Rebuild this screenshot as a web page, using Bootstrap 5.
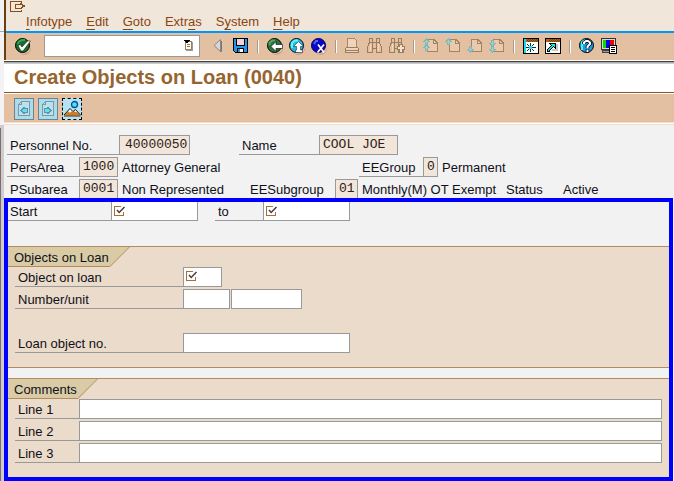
<!DOCTYPE html>
<html lang="en">
<head>
<meta charset="utf-8">
<meta name="viewport" content="width=device-width, initial-scale=1">
<title>Create Objects on Loan (0040)</title>
<link href="https://cdn.jsdelivr.net/npm/bootstrap@5.3.0/dist/css/bootstrap.min.css" rel="stylesheet">
<style>
  body { font: 13px/17px "Liberation Sans", Arial, sans-serif; color: #101018; background: #f2f2f2; }
  svg { display: block; shape-rendering: crispEdges; overflow: visible; }
  .soft { shape-rendering: auto; }
  button { font: inherit; }
  .edge { width: 4px; background: linear-gradient(#f2f2f4 0 31px, #a9a9ad 31px 32px, #f4f2f2 32px 125px, #d3cbcb 125px); }
  .edge-line { width: 1px; margin-top: 128px; background: #776e72; }
  .top-area { border-left: 2px solid #6b3f0c; }
  .menu-area { background: #f1e6da; border-bottom: 2px solid #0096fa; padding: 1px 0 0 4px; }
  .menu-row { gap: 14px; padding: 1px 0 1px 16px; }
  .menu-row button { color: #884513; line-height: 16px; }
  .menu-row u { text-underline-offset: 3px; text-decoration-thickness: 1px; }
  .tools { background: #e4c0a2; height: 27px; padding: 0 0 1px 9px; gap: 6px; }
  .cmd { width: 156px; margin: 0 5px 0 7px; }
  .cmd input { height: 22px; border: 1px solid #999; background: #fff; }
  .cmd button { top: 5px; right: 6px; }
  .split { width: 2px; height: 13px; margin: 1px 2px 0; border-left: 1px solid #a39a92; background: #fff; }
  .rule-dark { height: 4px; background: linear-gradient(#fff 0 1px, #444 1px 2px, #aaa 2px 3px, #ccc 3px); }
  .title-bar { background: #fff; border-bottom: 1px solid #875625; padding: 0 10px 2px; }
  .title-bar h1 { font: bold 20px/26px "Liberation Sans", Arial, sans-serif; color: #96652f; }
  .app-bar { background: #e4c0a2; border-top: 1px solid #fff; border-bottom: 1px solid #f0dccb; padding: 4px 10px 2px; gap: 4px; }
  .app-bar button { background: #a9dcec; border: 1px solid #74808a; width: 20px; height: 22px; padding: 0; }
  .app-bar button.now { border: 1px dashed #000; background: #b5e3f2; }
  .after-bar { height: 2px; background: #fff; border-bottom: 1px solid #f0dccb; }
  .head-form { padding: 10px 0 0 3px; }
  .line-row { height: 20px; margin-bottom: 2px; }
  .line-row.cut { height: 19px; margin-bottom: 0; }
  .cap { border-bottom: 1px solid #999; padding: 2px 0 0 3px; white-space: nowrap; flex: none; }
  .cut .cap { border-bottom: 0; }
  .val { padding: 2px 0 0 4px; white-space: nowrap; flex: none; }
  .fld { display: block; border: 1px solid #999; background: #fff; border-radius: 0; padding: 0 2px; height: 20px; min-width: 0; flex: none; outline: 0; }
  .fld.ro { background: #f2e6da; font: 13px/17px "Liberation Mono", "Courier New", monospace; color: #2c2018; padding: 0 0 1px 3px; }
  .fld.wide-pad { padding-left: 5px; }
  .cut .fld { height: 19px; border-bottom: 0; }
  .start-row { height: 19px; margin-bottom: 25px; }
  .start-row .fld { height: 19px; border-top: 0; }
  .need { position: relative; flex: none; }
  .need svg { position: absolute; left: 3px; top: 4px; }
  .w15 { width: 15px } .w23 { width: 23px } .w39 { width: 39px } .w47 { width: 47px }
  .w48 { width: 48px } .w56 { width: 56px } .w64 { width: 64px } .w71 { width: 71px }
  .w72 { width: 72px } .w79 { width: 79px } .w80 { width: 80px } .w87 { width: 87px }
  .w88 { width: 88px } .w103 { width: 103px } .w112 { width: 112px } .w129 { width: 129px }
  .w145 { width: 145px } .w167 { width: 167px } .w168 { width: 168px } .w241 { width: 241px }
  .ml49 { margin-left: 49px } .ml17 { margin-left: 17px } .ml1 { margin-left: 1px }
  .focus-frame { border: 4px solid #00f; margin-right: 1px; }
  .start-row .cap { padding: 1px 0 0 2px; }
  .start-row .cap.ml17 { padding-left: 3px; }
  .group { background: #ebdbcb; border-top: 1px solid #b48a60; padding: 0 7px 0; }
  .group-tab { font-size: 13px; line-height: 17px; margin: 0 0 0 -7px; height: 20px; }
  .group-tab span { background: #d9cba6; border-bottom: 1px solid #b48a60; padding: 2px 0 0 6px; white-space: nowrap; }
  .tab-loan { width: 102px } .tab-note { width: 70px }
  .loan { border-bottom: 1px solid #b48a60; padding-bottom: 12px; margin-bottom: 10px; }
  .notes { padding-bottom: 12px; }
  .space-row { height: 22px; }
</style>
</head>
<body>
<svg width="0" height="0" class="position-absolute" aria-hidden="true">
  <defs>
    <g id="req"><path d="M7 .5H.5V9.500H9.500V6" fill="none" stroke="#a5712e"/><path class="soft" d="M3 4L5.200 6.500L10.500 1" fill="none" stroke="#4a3a44" stroke-width="1.500"/></g>
    <g id="sheet"><path d="M5.500 2.500H12L15.500 6V14.500H5.500Z" fill="#ebc9ae" stroke="#a08660"/><path d="M11.500 2.500V6.500H15" fill="none" stroke="#a08660"/></g>
    <g id="up"><path d="M3 0H4V1H5V2H6V3H7V4H5V7H2V4H0V3H1V2H2V1H3Z" fill="#84b5b0"/><path d="M3 2H4V6H3ZM2 3H5V4H2Z" fill="#94d6d8"/></g>
    <g id="down"><path d="M3 7H4V6H5V5H6V4H7V3H5V0H2V3H0V4H1V5H2V6H3Z" fill="#84b5b0"/><path d="M3 1H4V5H3ZM2 3H5V4H2Z" fill="#94d6d8"/></g>
    <g id="bino"><path d="M2.500 .5H5.500V4.500H9.500V.5H12.500V4.500L14.500 9V14.500H9.500V10.500H5.500V14.500H.5V9L2.500 4.500Z" fill="#e8bd9e" stroke="#958060"/><path d="M2 4.500H6M9 4.500H13M5.500 5V10M9.500 5V10" stroke="#958060"/><path d="M3 6V13M11 6V13" stroke="#f7d9c3"/></g>
    <g id="page"><path d="M6.500 2.500H14.500V16.500H3.500V5.500Z" fill="#b9e2ec" stroke="#8098a4"/><path d="M6.500 3V5.500H4" fill="none" stroke="#8098a4"/></g>
    <g id="win"><path d="M.5 .5H15.500V15.500H.5Z" fill="#fff" stroke="#000"/><path d="M1 1H15V4H1Z" fill="#a8641c"/><path d="M5 1.500H15M4 2.500H15M5 3.500H15" stroke="#74420e" stroke-dasharray="1 1"/></g>
    <g id="shade"><path class="soft" d="M15 6A7 7 0 0 1 5 15.500L9 16L14 14L16 10Z" fill="#c79a8c"/></g>
  </defs>
</svg>

<div class="d-flex min-vh-100">
  <div class="edge d-flex flex-shrink-0"><div class="edge-line"></div></div>
  <main class="flex-grow-1 d-flex flex-column">
    <header>
      <div class="top-area">
        <div class="menu-area">
          <svg width="16" height="12" viewBox="0 0 16 12" aria-hidden="true"><path d="M11.500 2V.5H.5V10.500H11.500V9" fill="none" stroke="#884d18"/><path d="M5.500 3.500H10.500V2.500H11.500V3.500H12.500V4.500H14.500V5.500H12.500V6.500H11.500V7.500H5.500Z" fill="#f1e6da" stroke="#884d18"/></svg>
          <nav class="menu-row d-flex" aria-label="Menu">
            <button class="border-0 bg-transparent p-0"><u>I</u>nfotype</button>
            <button class="border-0 bg-transparent p-0"><u>E</u>dit</button>
            <button class="border-0 bg-transparent p-0"><u>G</u>oto</button>
            <button class="border-0 bg-transparent p-0">Extr<u>a</u>s</button>
            <button class="border-0 bg-transparent p-0">S<u>y</u>stem</button>
            <button class="border-0 bg-transparent p-0"><u>H</u>elp</button>
          </nav>
        </div>
        <div class="tools d-flex align-items-center">
          <button class="border-0 bg-transparent p-0" aria-label="Enter"><svg class="soft" width="16" height="16" viewBox="0 0 16 16"><use href="#shade"/><circle cx="7.500" cy="7.500" r="7" fill="#14702a" stroke="#000"/><path d="M2.500 6L4 3.500L7 2H10" fill="none" stroke="#35a552" stroke-width="2"/><path d="M3 7.500L5 6.500L7 9L12.500 3H15.500L8 13H6Z" fill="#fff" stroke="#000" stroke-width=".5"/></svg></button>
          <div class="cmd position-relative">
            <input class="w-100 rounded-0 d-block px-1" aria-label="Command">
            <button class="position-absolute border-0 bg-transparent p-0" aria-label="Command history"><svg width="10" height="11" viewBox="0 0 10 11"><path d="M1.500 1V9.500H7.500V1Z" fill="#fff" stroke="#9b8060"/><path d="M8.500 2V10.500H2" fill="none" stroke="#9c9c9c"/><path d="M3 4.500H6M3 6.500H6" stroke="#997448"/><path d="M0 0H6V1H5V2H4V3H2V2H1V1H0Z" fill="#000"/></svg></button>
          </div>
          <button class="border-0 bg-transparent p-0" aria-label="Collapse"><svg class="soft" width="16" height="16" viewBox="0 0 16 16"><path d="M3 7.500L9.500 1.500V13.500Z" fill="#d6d6d6" stroke="#888"/><path d="M10.500 3V13.500L9 13" fill="none" stroke="#777"/></svg></button>
          <button class="border-0 bg-transparent p-0" aria-label="Save"><svg width="16" height="16" viewBox="0 0 16 16"><path d="M.5 .5H14.500V14.500H2.500L.5 12.500Z" fill="#2992e4" stroke="#000"/><path d="M3.500 .5H11.500V7.500H3.500Z" fill="#ecd3dc" stroke="#000"/><path d="M4.500 10.500H10.500V14.500H4.500Z" fill="#f7f7f7" stroke="#000"/><path d="M5 11H7V14H5Z" fill="#2992e4"/></svg></button>
          <span class="split"></span>
          <button class="border-0 bg-transparent p-0" aria-label="Back"><svg class="soft" width="16" height="16" viewBox="0 0 16 16"><use href="#shade"/><circle cx="7.500" cy="7.500" r="7" fill="#28733a" stroke="#000"/><path d="M2.500 7V5L5 2.500H8" fill="none" stroke="#59a75c" stroke-width="2"/><path d="M4 8.500L9 3.500V6.500H15.500V10.500H9V13.500Z" fill="#fff" stroke="#000" stroke-width=".6"/></svg></button>
          <button class="border-0 bg-transparent p-0" aria-label="Exit"><svg class="soft" width="16" height="16" viewBox="0 0 16 16"><use href="#shade"/><circle cx="7.500" cy="7.500" r="7" fill="#27b8e8" stroke="#000"/><path d="M3 10V5L6 2.500H9" fill="none" stroke="#5df4fa" stroke-width="2"/><path d="M9.500 3.500L14.500 8.500H11.500V12H13.500V14.500H6.500V12H7.500V8.500H4.500Z" fill="#fff" stroke="#0a3054" stroke-width=".6"/></svg></button>
          <button class="border-0 bg-transparent p-0" aria-label="Cancel"><svg class="soft" width="16" height="16" viewBox="0 0 16 16"><use href="#shade"/><circle cx="7.500" cy="7.500" r="7" fill="#0808c8" stroke="#000050"/><path d="M3 6L5 3H7" fill="none" stroke="#5165f0" stroke-width="2"/><path d="M7 6.500L13 14.500M13 6.500L6.500 14.500" stroke="#fff" stroke-width="1.700"/></svg></button>
          <span class="split"></span>
          <button class="border-0 bg-transparent p-0" aria-label="Print"><svg width="16" height="16" viewBox="0 0 16 16"><path d="M2.500 .5H9.500L11.500 2.500V9.500H2.500Z" fill="#f1d2bc" stroke="#a58a64"/><path d="M1.500 9.500H12.500L13.500 11V14.500H.5V11Z" fill="#f1d2bc" stroke="#958060"/><path d="M1 12.500H13" stroke="#958060"/></svg></button>
          <button class="border-0 bg-transparent p-0" aria-label="Find"><svg width="16" height="16" viewBox="0 0 16 16"><use href="#bino"/></svg></button>
          <button class="border-0 bg-transparent p-0" aria-label="Find next"><svg width="16" height="16" viewBox="0 0 16 16"><use href="#bino"/><path d="M10.500 6.500H13.500V8.500H15.500V11.500H13.500V14.500H10.500V11.500H8.500V8.500H10.500Z" fill="#f7dfcd" stroke="#958060"/></svg></button>
          <span class="split"></span>
          <button class="border-0 bg-transparent p-0" aria-label="First page"><svg width="16" height="16" viewBox="0 0 16 16"><use href="#sheet" x="-1" y="-1"/><use href="#up"/><use href="#up" y="6"/></svg></button>
          <button class="border-0 bg-transparent p-0" aria-label="Previous page"><svg width="16" height="16" viewBox="0 0 16 16"><use href="#sheet" x="-1" y="-1"/><use href="#up"/></svg></button>
          <button class="border-0 bg-transparent p-0" aria-label="Next page"><svg width="16" height="16" viewBox="0 0 16 16"><use href="#sheet" x="-1" y="-1"/><use href="#down" y="8"/></svg></button>
          <button class="border-0 bg-transparent p-0" aria-label="Last page"><svg width="16" height="16" viewBox="0 0 16 16"><use href="#sheet" x="-1" y="-1"/><use href="#down" y="2"/><use href="#down" y="8"/></svg></button>
          <span class="split"></span>
          <button class="border-0 bg-transparent p-0" aria-label="New session"><svg width="16" height="16" viewBox="0 0 16 16"><use href="#win"/><path d="M1 1H3V15H1Z" fill="#19d8e8"/><path d="M7 5H8V8H7ZM7 11H8V14H7ZM3 9H6V10H3ZM9 9H13V10H9ZM4 6H5V7H4ZM5 7H6V8H5ZM10 6H11V7H10ZM9 7H10V8H9ZM4 12H5V13H4ZM5 11H6V12H5ZM10 12H11V13H10ZM9 11H10V12H9Z" fill="#06323c"/><path d="M6 8H9V11H6Z" fill="#12dfee"/></svg></button>
          <button class="border-0 bg-transparent p-0" aria-label="Create shortcut"><svg width="16" height="16" viewBox="0 0 16 16"><use href="#win"/><path d="M11 6H13V13H7V11H11Z" fill="#c9c9c9"/><path d="M4 5H11V11H10V10H9V9H8V10H7V11H6V12H5V14H2V11H3V10H4V9H5V8H6V7H5V6H4Z" fill="#000"/><path d="M6 6H10V9H9V8H8V9H7V10H6V11H5V12H4V13H3V11H4V10H5V9H6V8H7V7H6Z" fill="#0fe8e8"/></svg></button>
          <span class="split"></span>
          <button class="border-0 bg-transparent p-0" aria-label="Help"><svg class="soft" width="16" height="16" viewBox="0 0 16 16"><circle cx="7.500" cy="7.500" r="7" fill="#1d9be8" stroke="#000"/><path d="M3 12V4L6 2" fill="none" stroke="#4ff0f5" stroke-width="2"/><path d="M5 6V4.500L7 3H9L11 4.500V6L8.500 8.500V10M8.500 11V14.500" fill="none" stroke="#000" stroke-width="3.500"/><path d="M5 6V4.500L7 3H9L11 4.500V6L8.500 8.500V10M8.500 11.500V14" fill="none" stroke="#fff" stroke-width="2"/></svg></button>
          <button class="border-0 bg-transparent p-0" aria-label="Customize layout"><svg width="16" height="16" viewBox="0 0 16 16"><path d="M.5 .5H14.500V11.500H.5Z" fill="#d8d8d8" stroke="#333"/><path d="M2 2H5V10H2Z" fill="#0d0"/><path d="M5 2H9V10H5Z" fill="#00e"/><path d="M9 2H13V10H9Z" fill="#e00"/><path d="M1.500 12.500H9V14.500H1.500Z" fill="#999" stroke="#444"/><path d="M8.500 7.500H15.500V15.500H8.500Z" fill="#fff" stroke="#000"/><path d="M10 9.500H14M10 11.500H14M10 13.500H14" stroke="#000"/></svg></button>
        </div>
      </div>
      <div class="rule-dark"></div>
      <div class="title-bar"><h1 class="m-0">Create Objects on Loan (0040)</h1></div>
      <div class="app-bar d-flex">
        <button aria-label="Previous record"><svg width="18" height="20" viewBox="0 0 18 20"><use href="#page"/><path d="M5.500 11.500H6.500V10.500H7.500V9.500H8.500V8.500H9.500V9.500H12.500V13.500H9.500V14.500H8.500V13.500H7.500V12.500H6.500Z" fill="#65dff0" stroke="#5796a6"/></svg></button>
        <button aria-label="Next record"><svg width="18" height="20" viewBox="0 0 18 20"><use href="#page"/><path d="M12.500 11.500H11.500V10.500H10.500V9.500H9.500V8.500H8.500V9.500H5.500V13.500H8.500V14.500H9.500V13.500H10.500V12.500H11.500Z" fill="#65dff0" stroke="#5796a6"/></svg></button>
        <button class="now" aria-label="Overview"><svg class="soft" width="18" height="20" viewBox="0 0 18 20"><circle cx="11.500" cy="5.500" r="3" fill="#4fdcf8" stroke="#0a4c94" stroke-width="1.300"/><path d="M1 16.500L7 10L10 13L12.500 11L17.500 16.500Z" fill="#d07a24"/><path d="M4.500 13L7 10L9.500 12.500L8 12.500L7 14L6 12.500ZM11 12.500L12.500 11L15 13.500L13 13Z" fill="#fff"/><path d="M1 16L7 9.500L10 12.500L12.500 10.500L17.500 16" fill="none" stroke="#222"/><path d="M1 17H17.500" stroke="#5d2708"/></svg></button>
      </div>
      <div class="after-bar"></div>
    </header>

    <section class="head-form">
      <div class="line-row d-flex">
        <label class="cap w112" for="pno">Personnel No.</label><input class="fld ro wide-pad w71" id="pno" value="40000050" readonly>
        <label class="cap w80 ml49" for="nm">Name</label><input class="fld ro w79" id="nm" value="COOL JOE" readonly>
      </div>
      <div class="line-row d-flex">
        <label class="cap w72" for="pa">PersArea</label><input class="fld ro w39" id="pa" value="1000" readonly><span class="val w241">Attorney General</span>
        <label class="cap w64" for="eg">EEGroup</label><input class="fld ro w15" id="eg" value="0" readonly><span class="val">Permanent</span>
      </div>
      <div class="line-row cut d-flex">
        <label class="cap w72" for="ps">PSubarea</label><input class="fld ro w39" id="ps" value="0001" readonly><span class="val w129">Non Represented</span>
        <label class="cap w88" for="es">EESubgroup</label><input class="fld ro w23" id="es" value="01" readonly><span class="val w145">Monthly(M) OT Exempt</span>
        <span class="cap w56">Status</span><span class="val">Active</span>
      </div>
    </section>

    <section class="focus-frame flex-grow-1 d-flex flex-column">
      <div class="start-row d-flex">
        <label class="cap w103" for="st">Start</label><div class="need"><input class="fld w87" id="st" required><svg width="11" height="10" aria-hidden="true"><use href="#req"/></svg></div>
        <label class="cap w48 ml17" for="to">to</label><div class="need"><input class="fld w87" id="to" required><svg width="11" height="10" aria-hidden="true"><use href="#req"/></svg></div>
      </div>
      <div class="group loan">
        <h2 class="group-tab d-flex"><span class="tab-loan">Objects on Loan</span><svg class="soft" width="20" height="20" aria-hidden="true"><path d="M0 0H19L0 20Z" fill="#d9cba6"/><path d="M0 19.500L19.500 0" stroke="#b48a60"/></svg></h2>
        <div class="line-row d-flex"><label class="cap w168" for="ob">Object on loan</label><div class="need"><input class="fld w39" id="ob" required><svg width="11" height="10" aria-hidden="true"><use href="#req"/></svg></div></div>
        <div class="line-row d-flex"><label class="cap w168" for="nu">Number/unit</label><input class="fld w47" id="nu"><input class="fld w71 ml1" id="un" aria-label="Unit"></div>
        <div class="space-row"></div>
        <div class="line-row d-flex"><label class="cap w168" for="lo">Loan object no.</label><input class="fld w167" id="lo"></div>
      </div>
      <div class="group notes flex-grow-1">
        <h2 class="group-tab d-flex"><span class="tab-note">Comments</span><svg class="soft" width="20" height="20" aria-hidden="true"><path d="M0 0H19L0 20Z" fill="#d9cba6"/><path d="M0 19.500L19.500 0" stroke="#b48a60"/></svg></h2>
        <div class="line-row d-flex"><label class="cap w64" for="l1">Line 1</label><input class="fld flex-fill" id="l1"></div>
        <div class="line-row d-flex"><label class="cap w64" for="l2">Line 2</label><input class="fld flex-fill" id="l2"></div>
        <div class="line-row d-flex"><label class="cap w64" for="l3">Line 3</label><input class="fld flex-fill" id="l3"></div>
      </div>
    </section>
  </main>
</div>
<script src="https://cdn.jsdelivr.net/npm/bootstrap@5.3.0/dist/js/bootstrap.bundle.min.js"></script>
</body>
</html>
